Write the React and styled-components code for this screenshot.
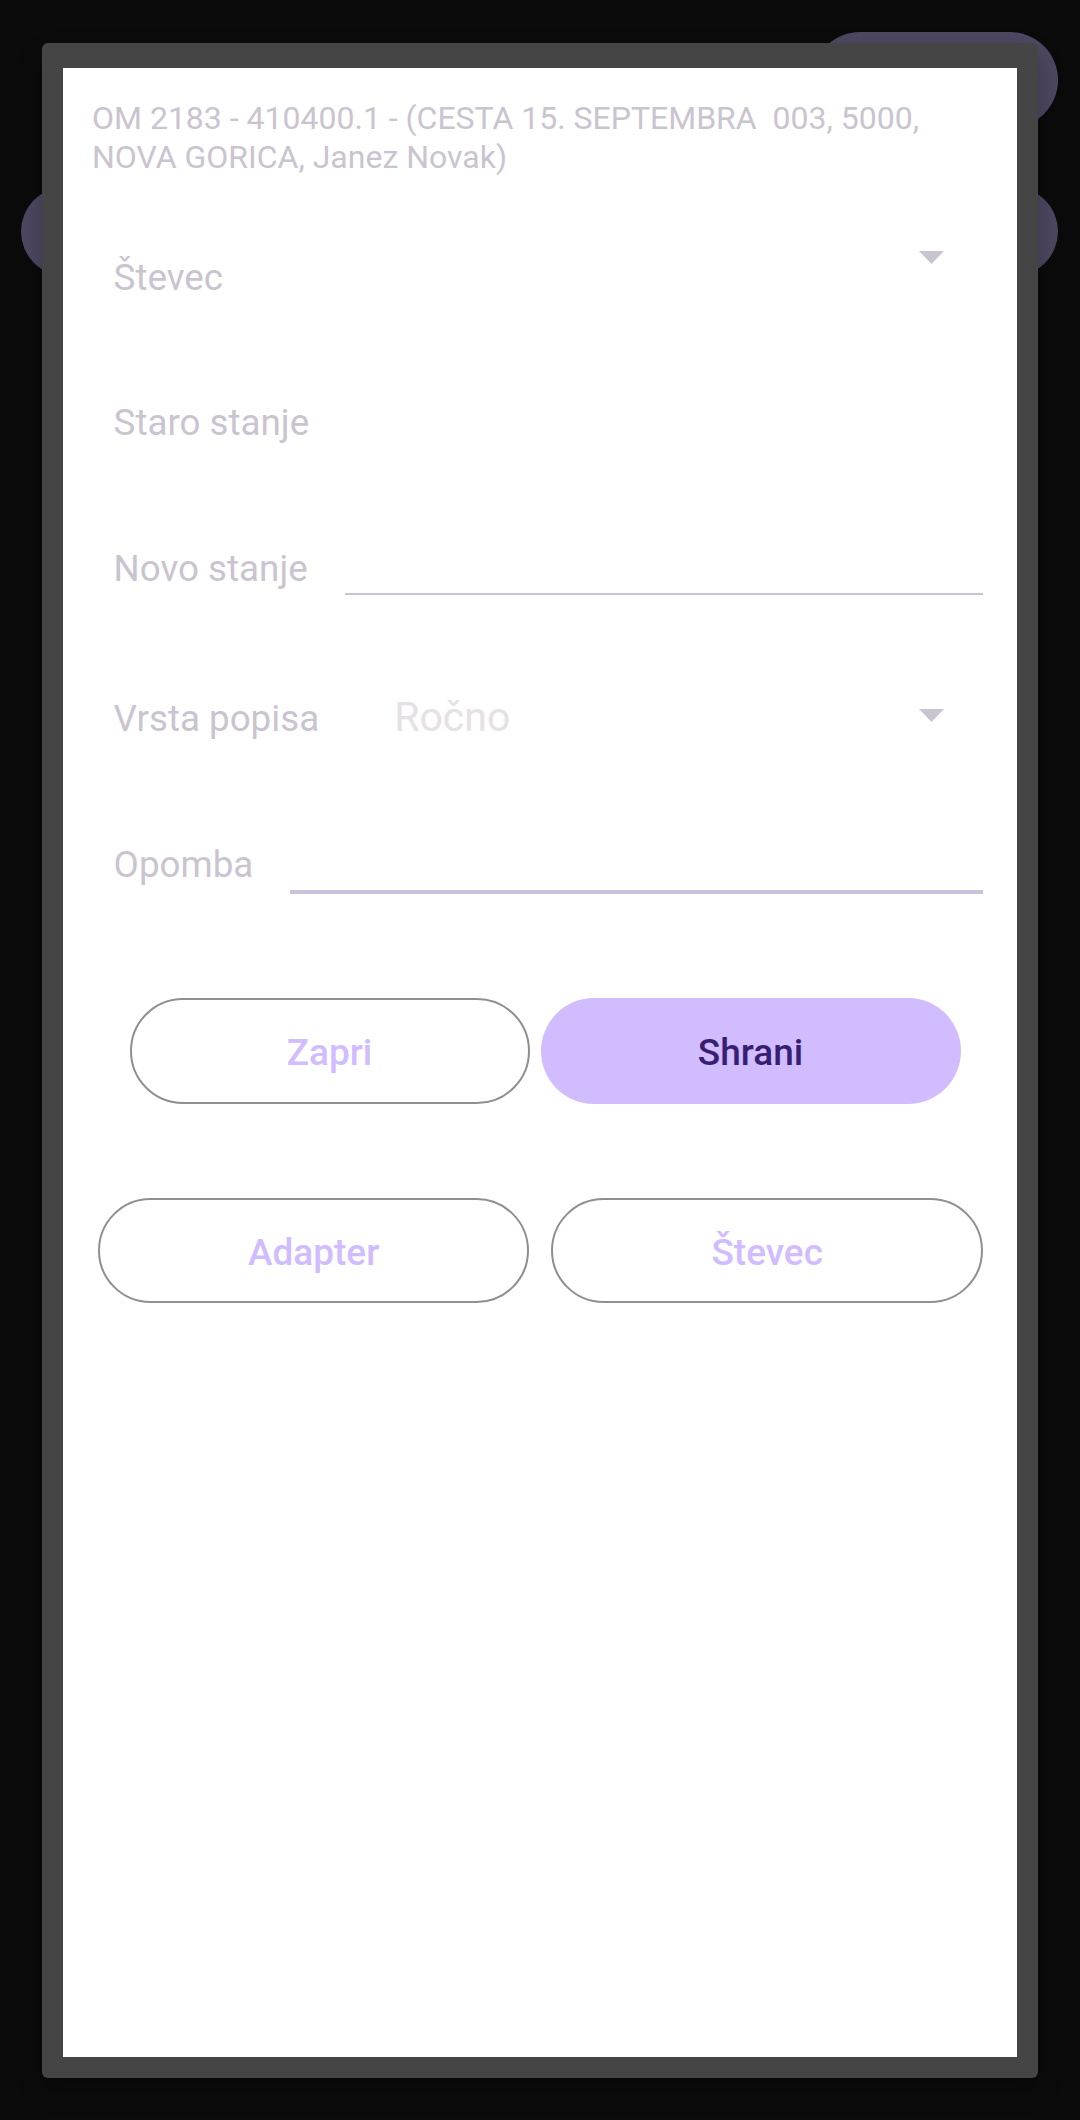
import React from "react";
import styled, { createGlobalStyle } from "styled-components";

const GlobalStyle = createGlobalStyle`
  html, body {
    margin: 0;
    padding: 0;
    background: #0b0b0b;
  }
  body {
    font-family: Roboto, "Noto Sans", "Liberation Sans", sans-serif;
  }
`;

const Arrow = () => (
  <svg width="25" height="13" viewBox="0 0 25 13">
    <polygon points="0,0 25,0 12.5,13" fill="#CAC4D0" />
  </svg>
);

export default () => {
  return (
    <Screen>
      <GlobalStyle />

      <Backdrop>
        <TopBar>
          <Pill $w={246} $h={96} />
        </TopBar>
        <PillRow>
          <Pill $h={89} />
          <Pill $h={89} />
        </PillRow>
      </Backdrop>

      <Dialog>
        <Panel>
          <Header>
            {"OM 2183 - 410400.1 - (CESTA 15. SEPTEMBRA  003, 5000, NOVA GORICA, Janez Novak)"}
          </Header>

          <FieldRow $mt={74}>
            <Label $mt={5}>Števec</Label>
            <ArrowBox>
              <Arrow />
            </ArrowBox>
          </FieldRow>

          <FieldRow $mt={102}>
            <Label>Staro stanje</Label>
          </FieldRow>

          <FieldRow $mt={103}>
            <Label>Novo stanje</Label>
            <TextInput $h={47.5} $line={2} $color="#CAC4D0" />
          </FieldRow>

          <FieldRow $mt={98.5}>
            <Label $mt={4}>Vrsta popisa</Label>
            <SpinnerValue>Ročno</SpinnerValue>
            <ArrowBox $mt={16}>
              <Arrow />
            </ArrowBox>
          </FieldRow>

          <FieldRow $mt={102}>
            <Label>Opomba</Label>
            <TextInput $h={50.5} $line={4} $color="#CCC2DC" />
          </FieldRow>

          <ButtonRow $mt={104.5} $pl={37.5} $gap={11}>
            <PillButton $w={400} $h={106}>Zapri</PillButton>
            <PillButton $w={420} $h={106} $filled>
              Shrani
            </PillButton>
          </ButtonRow>

          <ButtonRow $mt={94} $pl={5.8} $gap={22}>
            <PillButton $h={105}>Adapter</PillButton>
            <PillButton $h={105}>Števec</PillButton>
          </ButtonRow>
        </Panel>
      </Dialog>
    </Screen>
  );
};

const Screen = styled.div`
  position: relative;
  width: 1080px;
  height: 2120px;
  background: #0b0b0b;
  overflow: hidden;
`;

const Backdrop = styled.div`
  display: flex;
  flex-direction: column;
  padding: 32px 22px 0 21px;
`;

const TopBar = styled.div`
  display: flex;
  justify-content: flex-end;
`;

const PillRow = styled.div`
  display: flex;
  gap: 24px;
  margin-top: 59px;
`;

const Pill = styled.div`
  flex: ${p => (p.$w ? "none" : "1")};
  width: ${p => (p.$w ? `${p.$w}px` : "auto")};
  height: ${p => p.$h}px;
  border-radius: 48px;
  background: #4d4761;
`;

const Dialog = styled.div`
  position: absolute;
  top: 43px;
  left: 42px;
  width: 996px;
  height: 2035px;
  box-sizing: border-box;
  padding: 25px 21px 21px 21px;
  background: #454545;
  border-radius: 6px;
  box-shadow: 0 12px 24px rgba(0, 0, 0, 0.25);
`;

const Panel = styled.div`
  height: 100%;
  box-sizing: border-box;
  padding: 31px 34px 0 29px;
  background: #ffffff;
`;

const Header = styled.div`
  font-size: 32px;
  line-height: 39px;
  color: #cac4d0;
  white-space: pre-wrap;
`;

const FieldRow = styled.div`
  display: flex;
  align-items: flex-start;
  gap: 37px;
  margin-top: ${p => p.$mt}px;
  padding-left: 21.6px;
`;

const Label = styled.span`
  flex: none;
  margin-top: ${p => p.$mt || 0}px;
  font-size: 36.75px;
  line-height: 43px;
  color: #cac4d0;
`;

const TextInput = styled.input`
  flex: 1;
  min-width: 0;
  height: ${p => p.$h}px;
  box-sizing: border-box;
  padding: 0;
  border: 0;
  border-bottom: ${p => p.$line}px solid ${p => p.$color};
  background: transparent;
  outline: none;
`;

const SpinnerValue = styled.span`
  flex: 1;
  padding-left: 38px;
  font-size: 41px;
  line-height: 48px;
  color: #e6e1e5;
`;

const ArrowBox = styled.div`
  display: flex;
  margin-left: auto;
  margin-right: 39px;
  margin-top: ${p => p.$mt || 0}px;
`;

const ButtonRow = styled.div`
  display: flex;
  gap: ${p => p.$gap}px;
  margin-top: ${p => p.$mt}px;
  padding-left: ${p => p.$pl}px;
`;

const PillButton = styled.button`
  flex: ${p => (p.$w ? "none" : "1")};
  width: ${p => (p.$w ? `${p.$w}px` : "auto")};
  height: ${p => p.$h}px;
  box-sizing: border-box;
  padding: 3px 0 0;
  border: ${p => (p.$filled ? "none" : "2.5px solid #8f8e93")};
  border-radius: 60px;
  background: ${p => (p.$filled ? "#D0BCFF" : "#ffffff")};
  color: ${p => (p.$filled ? "#381E72" : "#D0BCFF")};
  font-family: Roboto, "Noto Sans", sans-serif;
  font-size: 37px;
  font-weight: 500;
`;
